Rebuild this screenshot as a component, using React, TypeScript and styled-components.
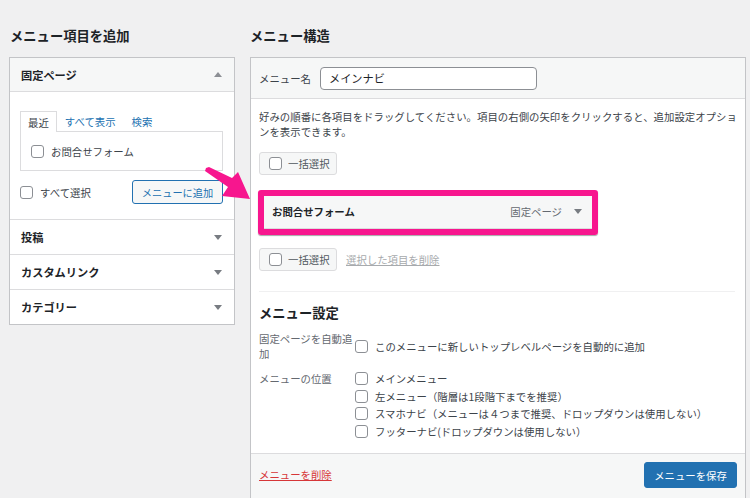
import React from 'react';
import styled, { createGlobalStyle } from 'styled-components';

const GlobalStyle = createGlobalStyle`
  html, body {
    margin: 0;
    padding: 0;
    background: #f0f0f1;
  }
  body {
    font-family: 'Noto Sans CJK JP', 'Noto Sans', sans-serif;
    color: #3c434a;
  }
  * { box-sizing: border-box; }
`;

const Page = styled.div`
  position: relative;
  width: 750px;
  height: 498px;
  overflow: hidden;
  display: grid;
  grid-template-columns: 226px 496px;
  column-gap: 15px;
  align-items: start;
  padding: 26px 0 0 9px;
`;

const Column = styled.div`
  display: flex;
  flex-direction: column;
`;

const Heading = styled.h2<{ $indent?: number }>`
  margin: 0 0 11px;
  padding-left: ${(p) => p.$indent ?? 0}px;
  font-size: 13.3px;
  line-height: 20px;
  font-weight: 700;
  color: #1d2327;
`;

const Panel = styled.div`
  background: #fff;
  border: 1px solid #c3c4c7;
`;

const AccordionHeader = styled.div<{ $open?: boolean }>`
  height: ${(p) => (p.$open ? 34 : 35)}px;
  display: flex;
  align-items: center;
  justify-content: space-between;
  padding: 0 12px 0 11px;
  font-size: 11.2px;
  font-weight: 700;
  color: #1d2327;
  background: ${(p) => (p.$open ? '#f6f7f7' : '#fff')};
  border-top: ${(p) => (p.$open ? 'none' : '1px solid #dcdcde')};
  border-bottom: ${(p) => (p.$open ? '1px solid #dcdcde' : 'none')};
`;

const Caret = styled.span<{ $up?: boolean }>`
  width: 0;
  height: 0;
  border-left: 4px solid transparent;
  border-right: 4px solid transparent;
  ${(p) => (p.$up ? 'border-bottom: 5px solid #8c8f94;' : 'border-top: 5px solid #787c82;')}
`;

const AccordionBody = styled.div`
  padding: 19px 11px 15px 10px;
`;

const Tabs = styled.div`
  display: flex;
  align-items: flex-end;
  height: 20px;
  font-size: 10.4px;
`;

const Tab = styled.span<{ $active?: boolean }>`
  height: ${(p) => (p.$active ? 21 : 20)}px;
  display: flex;
  align-items: center;
  padding: 0 ${(p) => (p.$active ? 7 : 8)}px;
  margin-bottom: ${(p) => (p.$active ? -1 : 0)}px;
  color: ${(p) => (p.$active ? '#3c434a' : '#2271b1')};
  background: ${(p) => (p.$active ? '#fff' : 'transparent')};
  border: ${(p) => (p.$active ? '1px solid #dcdcde' : 'none')};
  border-bottom: none;
  position: relative;
  z-index: 1;
`;

const TabPanel = styled.div`
  height: 40px;
  border: 1px solid #dcdcde;
  display: flex;
  align-items: center;
  padding-left: 10px;
`;

const Check = styled.span`
  display: inline-block;
  width: 13px;
  height: 13px;
  flex: none;
  border: 1px solid #8c8f94;
  border-radius: 3px;
  background: #fff;
`;

const CheckLabel = styled.label<{ $gap?: number }>`
  display: flex;
  align-items: center;
  gap: ${(p) => p.$gap ?? 7}px;
  font-size: 10.4px;
  color: #3c434a;
  line-height: 15px;
`;

const ActionRow = styled.div`
  margin-top: 9px;
  display: flex;
  align-items: center;
  justify-content: space-between;
`;

const OutlineButton = styled.button`
  height: 24px;
  width: 91px;
  padding: 0;
  font-family: inherit;
  font-size: 10.2px;
  color: #2271b1;
  background: #f6f7f7;
  border: 1px solid #2271b1;
  border-radius: 3px;
`;

const RightPanel = styled(Panel)`
  display: flex;
  flex-direction: column;
`;

const NameBar = styled.div`
  height: 41px;
  flex: none;
  display: flex;
  align-items: center;
  gap: 9px;
  padding: 0 8px;
  background: #f6f7f7;
  border-bottom: 1px solid #dcdcde;
  font-size: 10.4px;
`;

const NameInput = styled.div`
  width: 217px;
  height: 23px;
  display: flex;
  align-items: center;
  padding-left: 8px;
  font-size: 11.2px;
  color: #1d2327;
  background: #fff;
  border: 1px solid #8c8f94;
  border-radius: 4px;
`;

const Body = styled.div`
  padding: 10px 8px 0;
  display: flex;
  flex-direction: column;
`;

const Description = styled.p`
  margin: 0;
  font-size: 10.4px;
  line-height: 15px;
  letter-spacing: 0.02px;
`;

const BulkRow = styled.div<{ $top: number }>`
  margin-top: ${(p) => p.$top}px;
  display: flex;
  align-items: center;
  gap: 9px;
`;

const BulkButton = styled.div`
  width: 78px;
  height: 23px;
  display: flex;
  align-items: center;
  gap: 6px;
  padding-left: 9px;
  background: #f6f7f7;
  border: 1px solid #dcdcde;
  border-radius: 3px;
  font-size: 10.4px;
  color: #50575e;
`;

const MutedLink = styled.span`
  font-size: 10.4px;
  color: #a7aaad;
  text-decoration: underline;
`;

const Highlight = styled.div`
  margin: 15px 0 0 -1px;
  width: 340px;
  border: 6px solid #f7168e;
  border-radius: 3px;
  box-shadow: 0 1px 1px rgba(0, 0, 0, 0.35);
`;

const MenuItem = styled.div`
  height: 33px;
  display: flex;
  align-items: center;
  gap: 12px;
  padding: 0 10px 1px 8px;
  background: #f6f7f7;
  border-bottom: 1px solid #dcdcde;
  font-size: 10.4px;
`;

const ItemTitle = styled.span`
  flex: 1;
  font-weight: 700;
  color: #1d2327;
`;

const ItemType = styled.span`
  color: #646970;
`;

const Divider = styled.hr`
  margin: 20px 2px 0 0;
  border: none;
  border-top: 1px solid #f0f0f1;
`;

const SubHeading = styled.h3`
  margin: 11px 0 0;
  font-size: 13.3px;
  line-height: 20px;
  font-weight: 700;
  color: #1d2327;
`;

const SettingRow = styled.div<{ $top: number }>`
  margin-top: ${(p) => p.$top}px;
  display: grid;
  grid-template-columns: 96px 1fr;
  font-size: 10.4px;
  line-height: 15px;
`;

const SettingLabel = styled.div`
  color: #646970;
`;

const Options = styled.div`
  display: flex;
  flex-direction: column;
  gap: 2.7px;
`;

const Footer = styled.div`
  height: 52px;
  flex: none;
  margin-top: 14px;
  display: flex;
  align-items: flex-start;
  justify-content: space-between;
  padding: 8px 8px 0;
  background: #f6f7f7;
  border-top: 1px solid #dcdcde;
`;

const DeleteLink = styled.span`
  margin-top: 5px;
  font-size: 10.4px;
  color: #d63638;
  text-decoration: underline;
`;

const PrimaryButton = styled.button`
  width: 93px;
  height: 26px;
  padding: 0;
  font-family: inherit;
  font-size: 10.4px;
  color: #fff;
  background: #2271b1;
  border: 1px solid #2271b1;
  border-radius: 3px;
`;

const ArrowLayer = styled.svg`
  position: absolute;
  left: 0;
  top: 0;
  pointer-events: none;
`;

const closed = ['投稿', 'カスタムリンク', 'カテゴリー'];

const locations = [
  'メインメニュー',
  '左メニュー（階層は1段階下までを推奨）',
  'スマホナビ（メニューは４つまで推奨、ドロップダウンは使用しない）',
  'フッターナビ(ドロップダウンは使用しない）',
];

const App = () => {
  return (
    <>
      <GlobalStyle />
      <Page>
        <Column>
          <Heading $indent={1}>メニュー項目を追加</Heading>
          <Panel>
            <AccordionHeader $open>
              固定ページ
              <Caret $up />
            </AccordionHeader>
            <AccordionBody>
              <Tabs>
                <Tab $active>最近</Tab>
                <Tab>すべて表示</Tab>
                <Tab>検索</Tab>
              </Tabs>
              <TabPanel>
                <CheckLabel>
                  <Check />
                  お問合せフォーム
                </CheckLabel>
              </TabPanel>
              <ActionRow>
                <CheckLabel>
                  <Check />
                  すべて選択
                </CheckLabel>
                <OutlineButton>メニューに追加</OutlineButton>
              </ActionRow>
            </AccordionBody>
            {closed.map((title) => (
              <AccordionHeader key={title}>
                {title}
                <Caret />
              </AccordionHeader>
            ))}
          </Panel>
        </Column>

        <Column>
          <Heading>メニュー構造</Heading>
          <RightPanel>
            <NameBar>
              メニュー名
              <NameInput>メインナビ</NameInput>
            </NameBar>
            <Body>
              <Description>
                好みの順番に各項目をドラッグしてください。項目の右側の矢印をクリックすると、追加設定オプションを表示できます。
              </Description>
              <BulkRow $top={13}>
                <BulkButton>
                  <Check />
                  一括選択
                </BulkButton>
              </BulkRow>
              <Highlight>
                <MenuItem>
                  <ItemTitle>お問合せフォーム</ItemTitle>
                  <ItemType>固定ページ</ItemType>
                  <Caret />
                </MenuItem>
              </Highlight>
              <BulkRow $top={13}>
                <BulkButton>
                  <Check />
                  一括選択
                </BulkButton>
                <MutedLink>選択した項目を削除</MutedLink>
              </BulkRow>
              <Divider />
              <SubHeading>メニュー設定</SubHeading>
              <SettingRow $top={8}>
                <SettingLabel>固定ページを自動追加</SettingLabel>
                <CheckLabel>
                  <Check />
                  このメニューに新しいトップレベルページを自動的に追加
                </CheckLabel>
              </SettingRow>
              <SettingRow $top={10}>
                <SettingLabel>メニューの位置</SettingLabel>
                <Options>
                  {locations.map((loc) => (
                    <CheckLabel key={loc}>
                      <Check />
                      {loc}
                    </CheckLabel>
                  ))}
                </Options>
              </SettingRow>
            </Body>
            <Footer>
              <DeleteLink>メニューを削除</DeleteLink>
              <PrimaryButton>メニューを保存</PrimaryButton>
            </Footer>
          </RightPanel>
        </Column>

        <ArrowLayer width="750" height="498" viewBox="0 0 750 498">
          <polygon
            points="206,168 209,167 232,178 238,172 250,199 222,196 228,187 205,171"
            fill="#f7168e"
          />
        </ArrowLayer>
      </Page>
    </>
  );
};

export default App;
